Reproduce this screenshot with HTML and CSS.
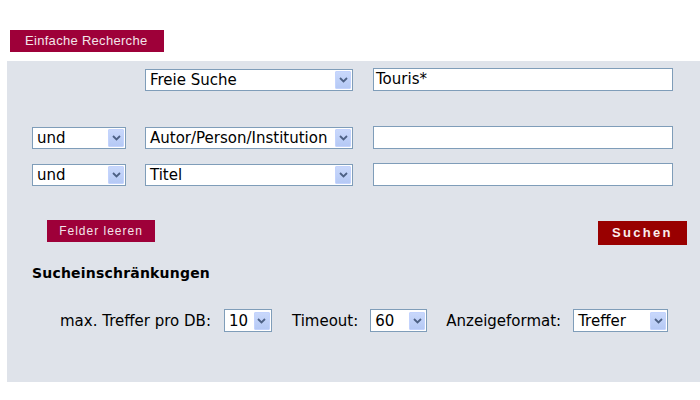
FILE: index.html
```html
<!DOCTYPE html>
<html lang="de">
<head>
<meta charset="utf-8">
<title>Einfache Recherche</title>
<link rel="stylesheet" href="styles.css">
</head>
<body>
<div class="tab">Einfache Recherche</div>
<div class="panel">
  <div class="grid">
    <div></div>
    <div class="sel wide"><span>Freie Suche</span><span class="arr"><svg width="9" height="6" viewBox="0 0 9 6"><path d="M1 1 L4.5 4.5 L8 1" fill="none" stroke="#4d6185" stroke-width="1.8"/></svg></span></div>
    <div class="inp">Touris*</div>

    <div class="sel r2"><span>und</span><span class="arr"><svg width="9" height="6" viewBox="0 0 9 6"><path d="M1 1 L4.5 4.5 L8 1" fill="none" stroke="#4d6185" stroke-width="1.8"/></svg></span></div>
    <div class="sel wide r2"><span>Autor/Person/Institution</span><span class="arr"><svg width="9" height="6" viewBox="0 0 9 6"><path d="M1 1 L4.5 4.5 L8 1" fill="none" stroke="#4d6185" stroke-width="1.8"/></svg></span></div>
    <div class="inp r2"></div>

    <div class="sel"><span>und</span><span class="arr"><svg width="9" height="6" viewBox="0 0 9 6"><path d="M1 1 L4.5 4.5 L8 1" fill="none" stroke="#4d6185" stroke-width="1.8"/></svg></span></div>
    <div class="sel wide"><span>Titel</span><span class="arr"><svg width="9" height="6" viewBox="0 0 9 6"><path d="M1 1 L4.5 4.5 L8 1" fill="none" stroke="#4d6185" stroke-width="1.8"/></svg></span></div>
    <div class="inp"></div>
  </div>

  <div class="buttons">
    <div class="btn-clear">Felder leeren</div>
    <div class="btn-search">Suchen</div>
  </div>

  <div class="heading">Sucheinschränkungen</div>

  <div class="limits">
    <span class="lbl">max. Treffer pro DB:</span>
    <div class="sel s10"><span>10</span><span class="arr"><svg width="9" height="6" viewBox="0 0 9 6"><path d="M1 1 L4.5 4.5 L8 1" fill="none" stroke="#4d6185" stroke-width="1.8"/></svg></span></div>
    <span class="lbl">Timeout:</span>
    <div class="sel s60"><span>60</span><span class="arr"><svg width="9" height="6" viewBox="0 0 9 6"><path d="M1 1 L4.5 4.5 L8 1" fill="none" stroke="#4d6185" stroke-width="1.8"/></svg></span></div>
    <span class="lbl">Anzeigeformat:</span>
    <div class="sel sfmt"><span>Treffer</span><span class="arr"><svg width="9" height="6" viewBox="0 0 9 6"><path d="M1 1 L4.5 4.5 L8 1" fill="none" stroke="#4d6185" stroke-width="1.8"/></svg></span></div>
  </div>
</div>
</body>
</html>
```
FILE: styles.css
```css
html, body {
  margin: 0;
  padding: 0;
  background: #ffffff;
  font-family: "DejaVu Sans", Verdana, sans-serif;
  color: #000;
}

.tab {
  margin: 30px 0 0 10px;
  width: 154px;
  height: 22px;
  box-sizing: border-box;
  background: #9e0039;
  color: #f3e4ea;
  font-family: "Liberation Sans", Arial, sans-serif;
  font-size: 13px;
  letter-spacing: 0.3px;
  line-height: 22px;
  padding-left: 15px;
}

.panel {
  margin: 9px 0 0 7px;
  width: 693px;
  height: 321px;
  box-sizing: border-box;
  background: #dfe3ea;
  padding: 7px 0 0 25px;
}

.grid {
  display: grid;
  grid-template-columns: 94px 208px 301px;
  column-gap: 19px;
  row-gap: 14px;
  align-items: center;
}
.grid > :nth-child(3n) { margin-left: 1px; }
.grid > .r2 { margin-top: 21px; }

.sel {
  height: 22px;
  box-sizing: border-box;
  border: 1px solid #7f9db9;
  background: #fff;
  display: flex;
  align-items: center;
  justify-content: space-between;
  font-size: 15px;
  padding-left: 4px;
  white-space: nowrap;
}
.arr {
  width: 16px;
  height: 18px;
  margin-right: 1px;
  box-sizing: border-box;
  background: linear-gradient(#c9d8fb, #b5c9f5);
  border: 1px solid #c3d3fd;
  border-radius: 1px;
  display: flex;
  align-items: center;
  justify-content: center;
  flex: none;
}

.inp {
  height: 23px;
  box-sizing: border-box;
  border: 1px solid #7f9db9;
  background: #fff;
  font-size: 15px;
  line-height: 21px;
  padding-left: 2px;
}

.buttons {
  display: flex;
  justify-content: space-between;
  align-items: flex-start;
  margin-top: 34px;
  padding-left: 15px;
  padding-right: 13px;
}
.btn-clear {
  width: 108px;
  height: 22px;
  box-sizing: border-box;
  background: #9e0039;
  color: #f3e4ea;
  font-family: "Liberation Sans", Arial, sans-serif;
  font-size: 12px;
  letter-spacing: 1px;
  line-height: 22px;
  text-align: center;
}
.btn-search {
  margin-top: 1px;
  width: 89px;
  height: 24px;
  box-sizing: border-box;
  background: #990000;
  color: #fbeeee;
  font-family: "Liberation Sans", Arial, sans-serif;
  font-size: 13px;
  font-weight: bold;
  letter-spacing: 2.3px;
  line-height: 24px;
  text-align: center;
}

.heading {
  margin-top: 18px;
  font-size: 14px;
  font-weight: bold;
  letter-spacing: 0.2px;
  line-height: 20px;
}

.limits {
  margin-top: 26px;
  padding-left: 28px;
  display: flex;
  align-items: center;
  font-size: 15px;
}
.limits .sel { height: 23px; }
.s10 { width: 48px; margin: 0 20px 0 13px; }
.s60 { width: 57px; margin: 0 19px 0 12px; }
.sfmt { width: 95px; margin-left: 12px; }
```
